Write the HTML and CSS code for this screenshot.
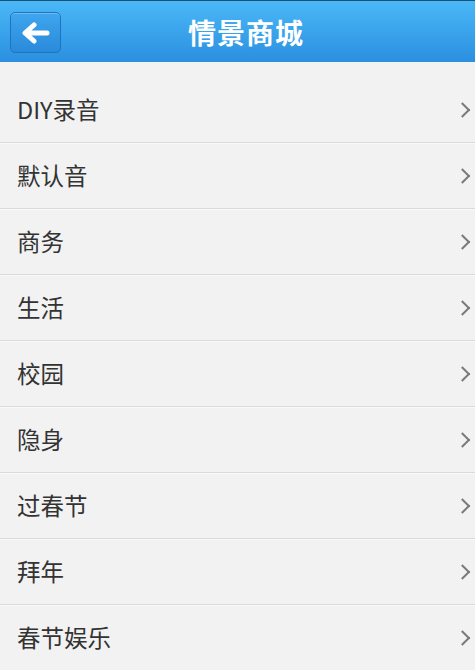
FILE: index.html
```html
<!DOCTYPE html>
<html lang="zh-CN">
<head>
  <meta charset="UTF-8" />
  <meta name="viewport" content="width=device-width, initial-scale=1.0"/>
  <title>情景商城</title>
  <link rel="stylesheet" href="styles.css">
</head>
<body>
  <div class="header">
    <button class="back">
      <svg width="30" height="22" viewBox="0 0 30 22">
        <path d="M13 3 L4 11 L13 19 M5 11 H26" fill="none" stroke="#fff" stroke-width="5" stroke-linecap="round" stroke-linejoin="round"/>
      </svg>
    </button>
    <h1>情景商城</h1>
  </div>

  <ul class="list">
    <li>DIY录音</li>
    <li>默认音</li>
    <li>商务</li>
    <li>生活</li>
    <li>校园</li>
    <li>隐身</li>
    <li>过春节</li>
    <li>拜年</li>
    <li>春节娱乐</li>
  </ul>
</body>
</html>
```

FILE: styles.css
```css
* {
  box-sizing: border-box;
}

body {
  margin: 0;
  background: #f2f2f2;
  font-family: "Noto Sans CJK SC", "Noto Sans", sans-serif;
  overflow: hidden;
}

.header {
  height: 62px;
  background: linear-gradient(#4ab8f7, #2b8fe0);
  border-top: 1px solid #1d4f78;
  display: flex;
  align-items: center;
  justify-content: center;
  position: relative;
}

.back {
  position: absolute;
  left: 10px;
  top: 11px;
  width: 51px;
  height: 41px;
  border-radius: 5px;
  border: 1px solid #1f74c0;
  background: linear-gradient(#3ea6ee, #2a8ada);
  box-shadow: inset 0 1px 0 rgba(255, 255, 255, 0.25);
  display: flex;
  align-items: center;
  justify-content: center;
  padding: 0;
}

h1 {
  margin: 0 0 0 17px;
  color: #fff;
  font-size: 28px;
  font-weight: 700;
  letter-spacing: 1px;
}

.list {
  list-style: none;
  margin: 15px 0 0;
  padding: 0;
}

.list li {
  height: 66px;
  display: flex;
  align-items: center;
  padding-left: 17px;
  padding-bottom: 2px;
  font-size: 23.5px;
  color: #333;
  border-bottom: 1px solid #dadada;
  box-shadow: 0 1px 0 #fafafa;
  position: relative;
}

.list li::after {
  content: "";
  position: absolute;
  right: 7px;
  top: 50%;
  width: 9px;
  height: 9px;
  border-top: 2.5px solid #7a7a7a;
  border-right: 2.5px solid #7a7a7a;
  transform: translateY(-50%) rotate(45deg);
}
```
